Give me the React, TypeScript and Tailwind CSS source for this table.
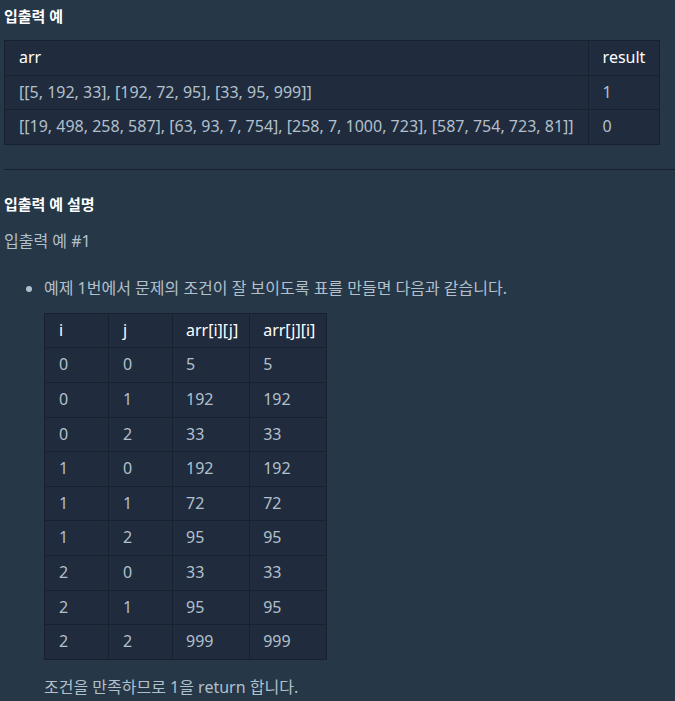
import React from "react";

const font = { fontFamily: '"Noto Sans", "Noto Sans CJK KR", sans-serif' };

const examples = [
  ["[[5, 192, 33], [192, 72, 95], [33, 95, 999]]", "1"],
  ["[[19, 498, 258, 587], [63, 93, 7, 754], [258, 7, 1000, 723], [587, 754, 723, 81]]", "0"],
];

const rows = [
  ["0", "0", "5", "5"],
  ["0", "1", "192", "192"],
  ["0", "2", "33", "33"],
  ["1", "0", "192", "192"],
  ["1", "1", "72", "72"],
  ["1", "2", "95", "95"],
  ["2", "0", "33", "33"],
  ["2", "1", "95", "95"],
  ["2", "2", "999", "999"],
];

const cell = "border border-[#172130] py-1.5 text-left font-normal leading-[21.6px]";

// 앞 두 칸은 고정 폭, 뒤 두 칸은 내용 폭
const colClass = (k: number) => (k < 2 ? "w-[64px] px-3.5" : "pl-[13px] pr-[11px]");

export default function App() {
  return (
    <div
      className="min-h-screen bg-[#263747] pl-1 text-[16px] leading-[22.5px] text-[#b2c0cc]"
      style={font}
    >
      <h5 className="pt-[6px] text-[15px] font-bold leading-[21px] text-white">입출력 예</h5>

      <table className="mt-[13px] border-collapse bg-[#202b3d]">
        <thead>
          <tr>
            <th className={`${cell} px-3.5 text-white`}>arr</th>
            <th className={`${cell} px-3.5 text-white`}>result</th>
          </tr>
        </thead>
        <tbody>
          {examples.map((r) => (
            <tr key={r[0]}>
              <td className={`${cell} px-3.5`}>{r[0]}</td>
              <td className={`${cell} px-3.5`}>{r[1]}</td>
            </tr>
          ))}
        </tbody>
      </table>

      <hr className="mt-[24px] border-t border-[#172130]" />

      <h5 className="mt-[24px] text-[15px] font-bold leading-[21px] text-white">입출력 예 설명</h5>

      <p className="mt-[15px]">입출력 예 #1</p>

      <ul className="mt-[25px] list-disc pl-10">
        <li>
          예제 1번에서 문제의 조건이 잘 보이도록 표를 만들면 다음과 같습니다.
          <table className="mt-[13px] border-collapse bg-[#202b3d]">
            <thead>
              <tr>
                {["i", "j", "arr[i][j]", "arr[j][i]"].map((h, k) => (
                  <th key={h} className={`${cell} ${colClass(k)} text-white`}>
                    {h}
                  </th>
                ))}
              </tr>
            </thead>
            <tbody>
              {rows.map((r, i) => (
                <tr key={i}>
                  {r.map((v, k) => (
                    <td key={k} className={`${cell} ${colClass(k)}`}>
                      {v}
                    </td>
                  ))}
                </tr>
              ))}
            </tbody>
          </table>
          <p className="mt-[16px]">조건을 만족하므로 1을 return 합니다.</p>
        </li>
      </ul>
    </div>
  );
}
